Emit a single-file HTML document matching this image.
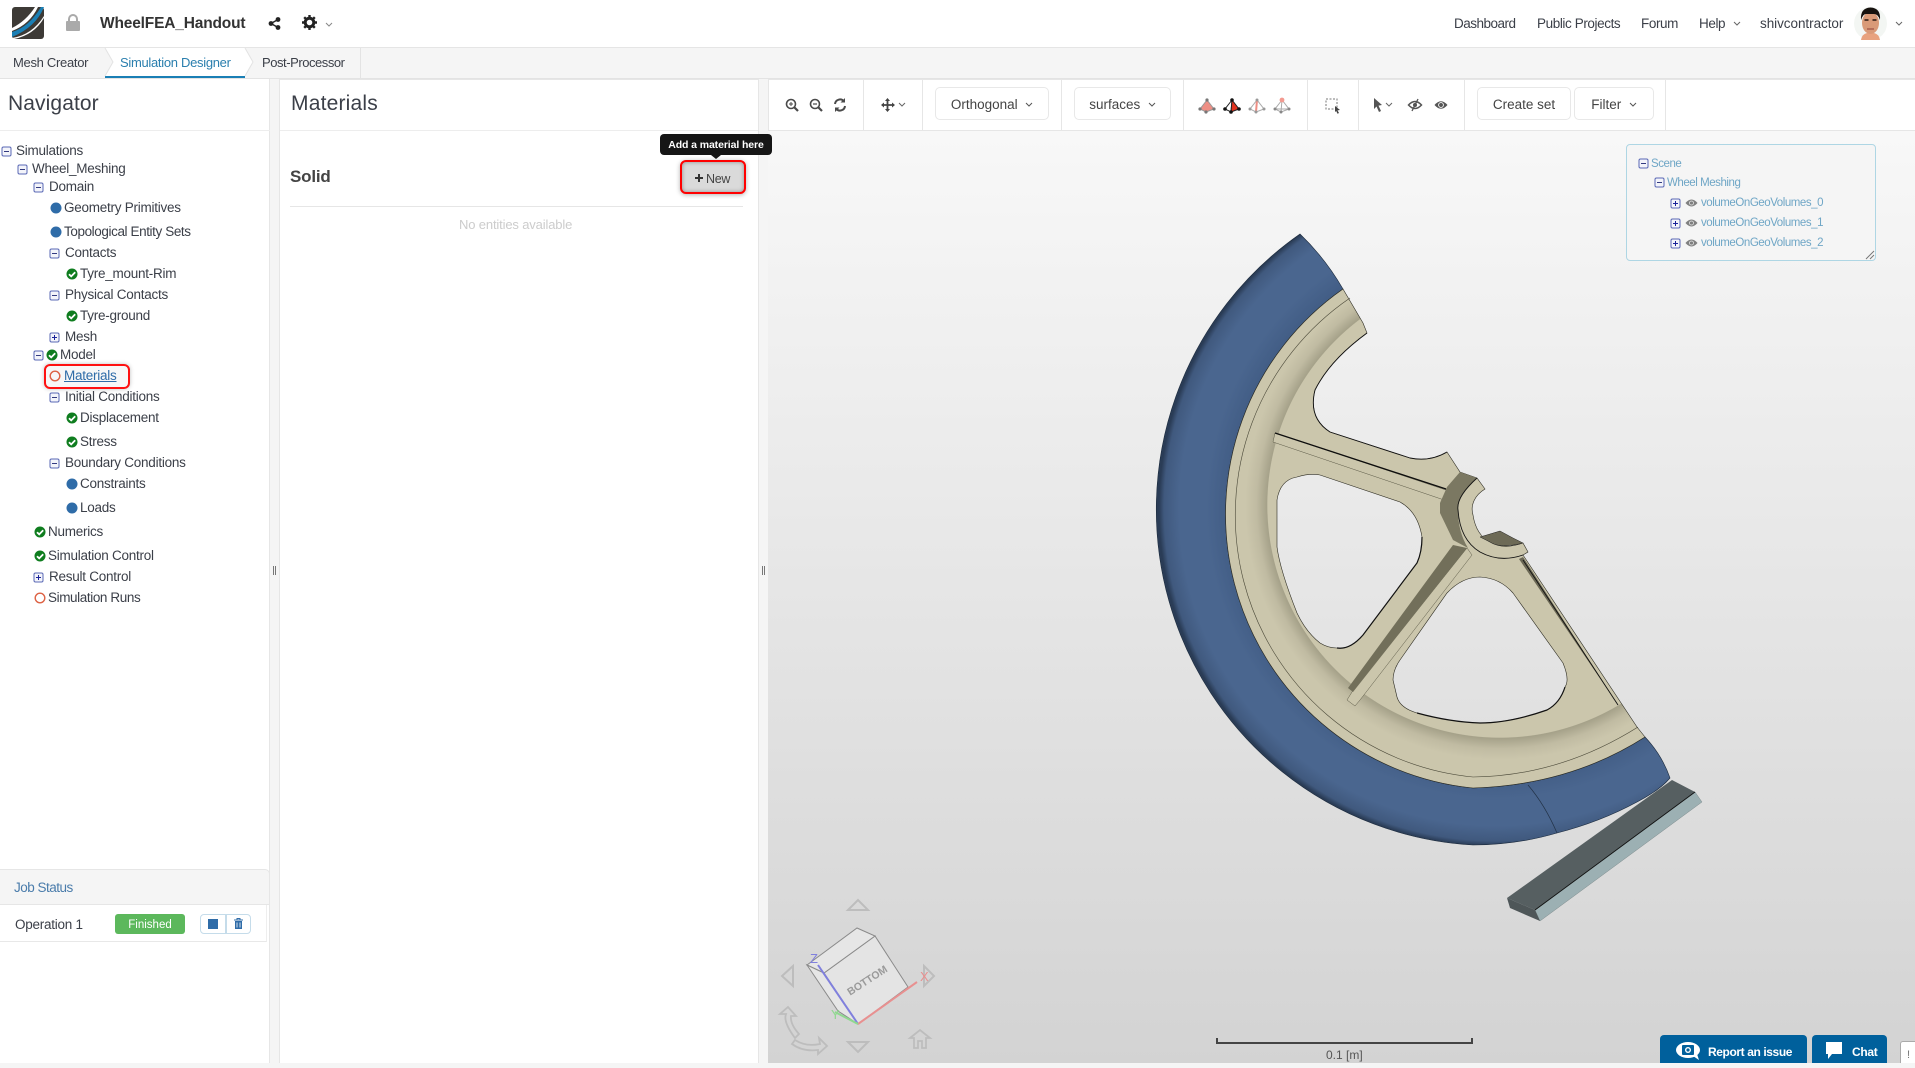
<!DOCTYPE html>
<html lang="en"><head><meta charset="utf-8"><title>WheelFEA_Handout</title>
<style>
*{box-sizing:border-box}
html,body{margin:0;padding:0;width:1915px;height:1063px;overflow:hidden;background:#f5f5f5;font-family:"Liberation Sans",Arial,sans-serif;color:#3b3f48}
.a{position:absolute}
.t{position:absolute;font-size:13.5px;letter-spacing:-.25px;line-height:20px;height:20px;white-space:nowrap;margin-top:1px}
.i{position:absolute;width:11px;height:11px;margin-top:1px}
.i.s{margin-top:0}
.btn{position:absolute;top:87px;height:33px;background:#fff;border:1px solid #e8e8e8;border-radius:5px;font-size:13.5px;line-height:33px;text-align:center;color:#444}
.t.sc{color:#6fa6c6;font-size:11.5px;letter-spacing:-.45px;margin-top:1px}
.sep{position:absolute;top:79px;width:1px;height:51px;background:#e6e6e6}
.tb{font-size:13px;letter-spacing:-.3px}
</style></head><body>
<svg width="0" height="0" style="position:absolute">
<defs>
<symbol id="m" viewBox="0 0 11 11"><rect x="1" y="1" width="9" height="9" rx="1.5" fill="#f3f4fa" stroke="#5a68b5"/><path d="M3 5.5h5" stroke="#333a80"/></symbol>
<symbol id="p" viewBox="0 0 11 11"><rect x="1" y="1" width="9" height="9" rx="1.5" fill="#f3f4fa" stroke="#5a68b5"/><path d="M3 5.5h5M5.5 3v5" stroke="#1a2299"/></symbol>
<symbol id="c" viewBox="0 0 12 12"><circle cx="6" cy="6" r="5.5" fill="#0f7d1f"/><path d="M3 6.2l2.2 2.2L9.2 4.3" fill="none" stroke="#fff" stroke-width="1.8"/></symbol>
<symbol id="d" viewBox="0 0 12 12"><circle cx="6" cy="6" r="5.5" fill="#2f6ca8"/></symbol>
<symbol id="o" viewBox="0 0 12 12"><circle cx="6" cy="6" r="4.8" fill="none" stroke="#dd6244" stroke-width="1.4"/></symbol>
<symbol id="e" viewBox="0 0 14 10"><path d="M0.500 5q6.500-7.500 13 0q-6.500 7.500-13 0z" fill="#808080"/><circle cx="7" cy="5" r="2.200" fill="none" stroke="#e8e8e8" stroke-width=".8"/></symbol>
<radialGradient id="tire" gradientUnits="userSpaceOnUse" cx="1496" cy="509" r="337">
<stop offset=".78" stop-color="#405b83"/><stop offset=".86" stop-color="#4a668f"/><stop offset=".94" stop-color="#4a668f"/><stop offset=".985" stop-color="#40597e"/><stop offset="1" stop-color="#2a3c56"/></radialGradient>
<radialGradient id="rim" gradientUnits="userSpaceOnUse" cx="1500" cy="505" r="280">
<stop offset="0" stop-color="#cbc6ac"/><stop offset=".83" stop-color="#cbc6ac"/><stop offset=".832" stop-color="#a5a189"/><stop offset=".87" stop-color="#c0bba2"/><stop offset=".91" stop-color="#cbc6ac"/><stop offset="1" stop-color="#cbc6ac"/></radialGradient>
</defs></svg>

<!-- top bar -->
<div class="a" style="left:0;top:0;width:1915px;height:48px;background:#fff;border-bottom:1px solid #e5e5e5"></div>
<svg class="a" style="left:12px;top:7px" width="32" height="32" viewBox="0 0 32 32"><rect width="32" height="32" rx="3" fill="#3d3a36"/><path d="M0 25Q17 20 29 0H32Q24 20 0 30Z" fill="#1a7fb5"/><path d="M0 21Q14 14 23 0H26Q18 17 0 24Z" fill="#fff"/><path d="M0 31Q20 28 32 9V11Q22 28 2 32Z" fill="#fff"/></svg>
<svg class="a" style="left:66px;top:14px" width="14" height="17" viewBox="0 0 14 17"><rect y="7" width="14" height="10" rx="1" fill="#aaa"/><path d="M3 8V5a4 4 0 0 1 8 0v3" fill="none" stroke="#aaa" stroke-width="2"/></svg>
<div class="t" style="left:100px;top:13px;font-size:15.5px;font-weight:700;letter-spacing:-.17px;color:#333">WheelFEA_Handout</div>
<svg class="a" style="left:268px;top:17px" width="13" height="13" viewBox="0 0 13 13"><path d="M10 2.5L3 6.5l7 4" fill="none" stroke="#222" stroke-width="1.4"/><circle cx="10" cy="2.5" r="2.4" fill="#222"/><circle cx="3" cy="6.5" r="2.4" fill="#222"/><circle cx="10" cy="10.5" r="2.4" fill="#222"/></svg>
<svg class="a" style="left:302px;top:15px" width="15" height="15" viewBox="0 0 15 15"><circle cx="7.5" cy="7.5" r="4.3" fill="none" stroke="#222" stroke-width="3"/><path d="M7.5 0v3M7.5 12v3M0 7.5h3M12 7.5h3M2.2 2.2l2 2M10.8 10.8l2 2M12.8 2.2l-2 2M4.2 10.8l-2 2" stroke="#222" stroke-width="2.4"/></svg>
<svg class="a" style="left:325px;top:22px" width="8" height="5" viewBox="0 0 8 5"><path d="M1 1l3 3 3-3" fill="none" stroke="#888"/></svg>
<div class="t" style="left:1454px;top:13px;letter-spacing:-.5px">Dashboard</div>
<div class="t" style="left:1537px;top:13px;letter-spacing:-.4px">Public Projects</div>
<div class="t" style="left:1641px;top:13px;letter-spacing:-.4px">Forum</div>
<div class="t" style="left:1699px;top:13px;letter-spacing:-.4px">Help</div>
<svg class="a" style="left:1733px;top:21px" width="8" height="5" viewBox="0 0 8 5"><path d="M1 1l3 3 3-3" fill="none" stroke="#666"/></svg>
<div class="t" style="left:1760px;top:13px;letter-spacing:-.05px">shivcontractor</div>
<svg class="a" style="left:1854px;top:7px" width="33" height="33" viewBox="0 0 33 33"><circle cx="16.5" cy="16.5" r="16.5" fill="#f3f6f3"/><path d="M7 33q1-6 6-7h7q5 1 6 7z" fill="#e8a27e"/><ellipse cx="16.5" cy="16" rx="8.5" ry="11" fill="#d99a78"/><path d="M7 13Q6 1 16.5 0.500Q27 1 26 13Q24 7 20 7H12Q9 7 7 13z" fill="#17120f"/><path d="M10.500 13h4M18.500 13h4" stroke="#2a1a14" stroke-width="1.400"/><path d="M13 22h7" stroke="#9c4f42" stroke-width="1.200"/></svg>
<svg class="a" style="left:1895px;top:21px" width="8" height="5" viewBox="0 0 8 5"><path d="M1 1l3 3 3-3" fill="none" stroke="#666"/></svg>

<!-- tab bar -->
<div class="a" style="left:0;top:48px;width:1915px;height:31px;background:#f5f5f5;border-bottom:1px solid #e3e3e3"></div>
<div class="a" style="left:105px;top:48px;width:140px;height:30px;background:#fff;border-bottom:2px solid #1a7fb5"></div>
<svg class="a" style="left:100px;top:48px" width="170" height="29" viewBox="0 0 170 29"><path d="M5 0l8 14-8 14" fill="#f5f5f5" stroke="#e3e3e3"/><path d="M145 0l8 14-8 14" fill="#fff" stroke="#e3e3e3"/></svg>
<div class="a" style="left:360px;top:48px;width:1px;height:30px;background:#e3e3e3"></div>
<div class="t tb" style="left:13px;top:52px">Mesh Creator</div>
<div class="t tb" style="left:120px;top:52px;color:#2b7fae">Simulation Designer</div>
<div class="t tb" style="left:262px;top:52px;letter-spacing:-.45px">Post-Processor</div>

<!-- navigator -->
<div class="a" style="left:0;top:79px;width:270px;height:984px;background:#fff;border-right:1px solid #e6e6e6"></div>
<div class="a" style="left:0;top:130px;width:270px;height:1px;background:#ededed"></div>
<div class="t" style="left:8px;top:90px;font-size:21px;line-height:26px;height:26px;letter-spacing:.1px">Navigator</div>

<svg class="i" style="left:1px;top:145px"><use href="#m"/></svg><div class="t" style="left:16px;top:140px">Simulations</div>
<svg class="i" style="left:17px;top:163px"><use href="#m"/></svg><div class="t" style="left:32px;top:158px">Wheel_Meshing</div>
<svg class="i" style="left:33px;top:181px"><use href="#m"/></svg><div class="t" style="left:49px;top:176px">Domain</div>
<svg class="i" style="left:50px;top:201px;width:12px;height:12px"><use href="#d"/></svg><div class="t" style="left:64px;top:197px">Geometry Primitives</div>
<svg class="i" style="left:50px;top:225px;width:12px;height:12px"><use href="#d"/></svg><div class="t" style="left:64px;top:221px;letter-spacing:-.4px">Topological Entity Sets</div>
<svg class="i" style="left:49px;top:247px"><use href="#m"/></svg><div class="t" style="left:65px;top:242px">Contacts</div>
<svg class="i" style="left:66px;top:267px;width:12px;height:12px"><use href="#c"/></svg><div class="t" style="left:80px;top:263px">Tyre_mount-Rim</div>
<svg class="i" style="left:49px;top:289px"><use href="#m"/></svg><div class="t" style="left:65px;top:284px">Physical Contacts</div>
<svg class="i" style="left:66px;top:309px;width:12px;height:12px"><use href="#c"/></svg><div class="t" style="left:80px;top:305px">Tyre-ground</div>
<svg class="i" style="left:49px;top:331px"><use href="#p"/></svg><div class="t" style="left:65px;top:326px">Mesh</div>
<svg class="i" style="left:33px;top:349px"><use href="#m"/></svg><svg class="i" style="left:46px;top:348px;width:12px;height:12px"><use href="#c"/></svg><div class="t" style="left:60px;top:344px">Model</div>
<div class="a" style="left:44px;top:364px;width:86px;height:25px;border:2px solid #f11;border-radius:6px;box-shadow:0 0 4px rgba(0,0,0,.25);background:#f7f7f7"></div>
<svg class="i" style="left:49px;top:369px;width:12px;height:12px"><use href="#o"/></svg><div class="t" style="left:64px;top:365px;color:#2f6ca8;text-decoration:underline">Materials</div>
<svg class="i" style="left:49px;top:391px"><use href="#m"/></svg><div class="t" style="left:65px;top:386px">Initial Conditions</div>
<svg class="i" style="left:66px;top:411px;width:12px;height:12px"><use href="#c"/></svg><div class="t" style="left:80px;top:407px">Displacement</div>
<svg class="i" style="left:66px;top:435px;width:12px;height:12px"><use href="#c"/></svg><div class="t" style="left:80px;top:431px">Stress</div>
<svg class="i" style="left:49px;top:457px"><use href="#m"/></svg><div class="t" style="left:65px;top:452px">Boundary Conditions</div>
<svg class="i" style="left:66px;top:477px;width:12px;height:12px"><use href="#d"/></svg><div class="t" style="left:80px;top:473px">Constraints</div>
<svg class="i" style="left:66px;top:501px;width:12px;height:12px"><use href="#d"/></svg><div class="t" style="left:80px;top:497px">Loads</div>
<svg class="i" style="left:34px;top:525px;width:12px;height:12px"><use href="#c"/></svg><div class="t" style="left:48px;top:521px">Numerics</div>
<svg class="i" style="left:34px;top:549px;width:12px;height:12px"><use href="#c"/></svg><div class="t" style="left:48px;top:545px">Simulation Control</div>
<svg class="i" style="left:33px;top:571px"><use href="#p"/></svg><div class="t" style="left:49px;top:566px">Result Control</div>
<svg class="i" style="left:34px;top:591px;width:12px;height:12px"><use href="#o"/></svg><div class="t" style="left:48px;top:587px;letter-spacing:-.4px">Simulation Runs</div>

<!-- job status -->
<div class="a" style="left:0;top:869px;width:270px;height:36px;background:#f5f5f5;border:1px solid #e6e6e6;border-left:0;border-radius:0 5px 0 0"></div>
<div class="t" style="left:14px;top:877px;color:#4a7cab;letter-spacing:-.5px">Job Status</div>
<div class="a" style="left:0;top:905px;width:267px;height:37px;border-bottom:1px solid #e8e8e8;border-right:1px solid #eee"></div>
<div class="t" style="left:15px;top:914px">Operation 1</div>
<div class="a" style="left:115px;top:914px;width:70px;height:20px;background:#5cb85c;border-radius:3px;color:#fff;font-size:11.5px;font-weight:400;line-height:22px;text-align:center">Finished</div>
<div class="a" style="left:200px;top:914px;width:26px;height:20px;border:1px solid #c5dcea;border-radius:4px 0 0 4px"></div>
<div class="a" style="left:208px;top:919px;width:10px;height:10px;background:#2f6ca8"></div>
<div class="a" style="left:226px;top:914px;width:25px;height:20px;border:1px solid #c5dcea;border-radius:0 4px 4px 0"></div>
<svg class="a" style="left:234px;top:918px" width="9" height="11" viewBox="0 0 9 11"><path d="M0 2h9M3 2V.5h3V2" stroke="#2f6ca8" fill="none"/><path d="M1 3h7v8H1z" fill="#2f6ca8"/><path d="M3 4.500v5M6 4.500v5" stroke="#fff" stroke-width=".8"/></svg>

<div class="a" style="left:273px;top:566px;width:1px;height:9px;background:#777;box-shadow:2px 0 0 #777"></div>

<!-- materials -->
<div class="a" style="left:279px;top:79px;width:480px;height:984px;background:#fff;border:1px solid #e6e6e6;border-bottom:0"></div>
<div class="a" style="left:280px;top:130px;width:478px;height:1px;background:#ededed"></div>
<div class="t" style="left:291px;top:90px;font-size:21px;line-height:26px;height:26px;letter-spacing:.2px">Materials</div>
<div class="t" style="left:290px;top:165px;font-size:17px;line-height:22px;height:22px;font-weight:700;letter-spacing:-.2px;color:#444">Solid</div>
<div class="a" style="left:290px;top:206px;width:453px;height:1px;background:#e6e6e6"></div>
<div class="t" style="left:459px;top:214px;color:#ccc;font-size:13px;letter-spacing:-.15px">No entities available</div>
<div class="a" style="left:680px;top:160px;width:66px;height:34px;border:2px solid #f00;border-radius:6px;background:#dadada;box-shadow:inset 0 0 4px rgba(0,0,0,.35),0 1px 5px rgba(0,0,0,.3)"></div>
<svg class="a" style="left:694px;top:173px" width="10" height="10" viewBox="0 0 10 10"><path d="M5 1v8M1 5h8" stroke="#333" stroke-width="2"/></svg>
<div class="t" style="left:706px;top:168px;font-size:12.5px;letter-spacing:-.3px;color:#444">New</div>

<div class="a" style="left:762px;top:566px;width:1px;height:9px;background:#777;box-shadow:2px 0 0 #777"></div>

<!-- viewport -->
<div class="a" style="left:768px;top:130px;width:1147px;height:933px;background:linear-gradient(#f8f8f8,#d3d3d3)"></div>
<!-- toolbar -->
<div class="a" style="left:768px;top:79px;width:1147px;height:52px;background:#fff;border-top:1px solid #e6e6e6;border-bottom:1px solid #e6e6e6;border-left:1px solid #e6e6e6"></div>
<div class="sep" style="left:863px"></div><div class="sep" style="left:922px"></div><div class="sep" style="left:1061px"></div><div class="sep" style="left:1183px"></div><div class="sep" style="left:1307px"></div><div class="sep" style="left:1358px"></div><div class="sep" style="left:1464px"></div><div class="sep" style="left:1665px"></div>
<svg class="a" style="left:785px;top:98px" width="64" height="14" viewBox="0 0 64 14" fill="none" stroke="#4a4a4a"><circle cx="6" cy="6" r="4.500" stroke-width="1.600"/><path d="M9.500 9.500L13 13" stroke-width="2.200"/><path d="M4 6h4M6 4v4" stroke-width="1"/><circle cx="30" cy="6" r="4.500" stroke-width="1.600"/><path d="M33.500 9.500L37 13" stroke-width="2.200"/><path d="M28 6h4" stroke-width="1.200"/><path d="M50 6a5 5 0 0 1 9-2.500M60 8a5 5 0 0 1-9 2.500" stroke-width="2"/><path d="M60 0v4.500h-4.500zM50 14V9.500h4.500z" fill="#4a4a4a" stroke="none"/></svg>
<svg class="a" style="left:881px;top:98px" width="30" height="14" viewBox="0 0 30 14"><path d="M6.500 1v12M1 7h12" stroke="#444" stroke-width="1.800"/><path d="M6.500 0l2.500 3H4zM6.500 14l2.500-3H4zM0 7l3-2.500v5zM14 7l-3-2.500v5z" fill="#444"/><path d="M18 5l3 3 3-3" fill="none" stroke="#666"/></svg>
<div class="btn" style="left:935px;width:114px">Orthogonal &nbsp;<svg width="8" height="5" viewBox="0 0 8 5" style="vertical-align:2px"><path d="M1 1l3 3 3-3" fill="none" stroke="#555"/></svg></div>
<div class="btn" style="left:1074px;width:97px">surfaces &nbsp;<svg width="8" height="5" viewBox="0 0 8 5" style="vertical-align:2px"><path d="M1 1l3 3 3-3" fill="none" stroke="#555"/></svg></div>
<svg class="a" style="left:1198px;top:97px" width="96" height="18" viewBox="0 0 96 18">
<path d="M9 3L2 12l6 3 8-3z" fill="#ee8f85" stroke="#999"/><g fill="#777"><circle cx="9" cy="3" r="1.600"/><circle cx="2" cy="12" r="1.600"/><circle cx="8" cy="15" r="1.600"/><circle cx="16" cy="12" r="1.600"/></g>
<path d="M34 3L27 12l6 3z" fill="#fff" stroke="#222"/><path d="M34 3l-1 12 8-3z" fill="#e2331f" stroke="#222"/><g fill="#111"><circle cx="34" cy="3" r="1.800"/><circle cx="27" cy="12" r="1.800"/><circle cx="33" cy="15" r="1.800"/><circle cx="41" cy="12" r="1.800"/></g>
<path d="M59 3L52 12l6 3 8-3zM59 3l-1 12" fill="none" stroke="#aaa"/><path d="M59 3l-1 12" stroke="#ee8f85" stroke-width="2"/><g fill="#999"><circle cx="59" cy="3" r="1.500"/><circle cx="52" cy="12" r="1.500"/><circle cx="58" cy="15" r="1.500"/><circle cx="66" cy="12" r="1.500"/></g>
<path d="M84 3L77 12l6 3 8-3zM84 3l-1 12M77 12h14" fill="none" stroke="#aaa"/><circle cx="84" cy="3" r="2.400" fill="#f39a90"/><g fill="#888"><circle cx="77" cy="12" r="1.500"/><circle cx="83" cy="15" r="1.500"/><circle cx="91" cy="12" r="1.500"/></g>
</svg>
<svg class="a" style="left:1325px;top:98px" width="16" height="16" viewBox="0 0 16 16"><rect x="1" y="1" width="11" height="10" fill="none" stroke="#777" stroke-dasharray="2 1.500"/><path d="M10 8l5 4-2.500.4L14 15l-1.500.7-1.300-2.700L10 14z" fill="#444"/></svg>
<svg class="a" style="left:1373px;top:97px" width="75" height="16" viewBox="0 0 75 16"><path d="M1 1l8 7-3.500.6L8 14l-2 1-2.500-5.500L1 12z" fill="#555"/><path d="M13 6l3 3 3-3" fill="none" stroke="#666"/><path d="M35.500 8q6.500-7 13 0q-6.500 7-13 0z" fill="none" stroke="#555" stroke-width="1.500"/><circle cx="42" cy="8" r="2" fill="#555"/><path d="M39 14l6-12" stroke="#555" stroke-width="1.300"/><path d="M61.500 8q6.500-7.500 13 0q-6.500 7.500-13 0z" fill="#555"/><circle cx="68" cy="8" r="2.400" fill="none" stroke="#fff" stroke-width=".9"/></svg>
<div class="btn" style="left:1477px;width:94px">Create set</div>
<div class="btn" style="left:1574px;width:80px">Filter &nbsp;<svg width="8" height="5" viewBox="0 0 8 5" style="vertical-align:2px"><path d="M1 1l3 3 3-3" fill="none" stroke="#555"/></svg></div>

<!-- scene tree -->
<div class="a" style="left:1626px;top:144px;width:250px;height:117px;border:1px solid #aed6e4;border-radius:4px;background:#f5f5f5"></div>
<svg class="i s" style="left:1638px;top:158px"><use href="#m"/></svg><div class="t sc" style="left:1651px;top:153px">Scene</div>
<svg class="i s" style="left:1654px;top:177px"><use href="#m"/></svg><div class="t sc" style="left:1667px;top:172px">Wheel Meshing</div>
<svg class="i s" style="left:1670px;top:198px"><use href="#p"/></svg><svg class="i s" style="left:1685px;top:198px;width:13px;height:10px"><use href="#e"/></svg><div class="t sc" style="left:1701px;top:192px">volumeOnGeoVolumes_0</div>
<svg class="i s" style="left:1670px;top:218px"><use href="#p"/></svg><svg class="i s" style="left:1685px;top:218px;width:13px;height:10px"><use href="#e"/></svg><div class="t sc" style="left:1701px;top:212px">volumeOnGeoVolumes_1</div>
<svg class="i s" style="left:1670px;top:238px"><use href="#p"/></svg><svg class="i s" style="left:1685px;top:238px;width:13px;height:10px"><use href="#e"/></svg><div class="t sc" style="left:1701px;top:232px">volumeOnGeoVolumes_2</div>
<svg class="a" style="left:1865px;top:250px" width="10" height="10" viewBox="0 0 10 10"><path d="M9 1L1 9M9 5L5 9" stroke="#777"/></svg>

<!-- 3D model -->
<svg class="a" style="left:0;top:0" width="1915" height="1063" viewBox="0 0 1915 1063" pointer-events="none">
<!-- tire -->
<path d="M1300 234A336 336 0 0 0 1473 845Q1516 845 1557 833Q1600 822 1637 802Q1660 790 1670 778Q1662 755 1645 737Q1570 785 1473 788A275 275 0 0 1 1343 289Q1325 258 1300 234z" fill="url(#tire)" stroke="#1b2a3c" stroke-width=".6"/>
<path d="M1528 785Q1545 805 1557 833" fill="none" stroke="#223247" stroke-width=".7"/>
<!-- ground block -->
<path d="M1507 898L1672 780 1695 792 1535 910z" fill="#565f61"/>
<path d="M1695 792L1702 802 1540 921 1535 910z" fill="#9cb0b3" stroke="#6f7c7e" stroke-width=".4"/>
<path d="M1507 898L1535 910 1540 921 1510 908z" fill="#4e5658"/>
<path d="M1535 910L1695 792" stroke="#111" stroke-width=".9"/>
<!-- rim -->
<path fill-rule="evenodd" fill="url(#rim)" stroke="#2b2a20" stroke-width=".6" d="M1343 289L1363 323 1367 333Q1330 360 1315 390Q1308 418 1330 432L1410 458Q1430 462 1447 452L1460 472 1477 478 1485 489C1475 495 1470 505 1473 515C1475 528 1480 537 1490 542C1500 548 1512 547 1523 543L1528 552 1523 555 1637 727 1645 737Q1570 785 1473 788A275 275 0 0 1 1343 289z
M1277 500Q1280 480 1297 477Q1310 473 1320 475L1400 502Q1418 512 1422 537Q1422 552 1417 563L1363 635Q1350 650 1337 648Q1328 648 1320 643Q1306 632 1297 613Q1280 570 1277 547z
M1393 680Q1393 670 1400 660L1447 593Q1462 577 1480 577Q1500 578 1513 593L1563 663Q1570 680 1565 687Q1560 703 1547 710Q1510 723 1480 723Q1450 722 1417 713Q1400 708 1397 697z"/>
<path d="M1367 333Q1330 360 1315 390Q1308 418 1330 432L1410 458Q1430 462 1447 452" fill="none" stroke="#111" stroke-width=".9"/>
<path d="M1350 298A263 263 0 0 0 1473 777Q1560 776 1638 727" fill="none" stroke="#4a4838" stroke-width=".6"/>
<path d="M1422 537Q1422 552 1417 563L1363 635Q1350 650 1337 648" fill="none" stroke="#111" stroke-width="1.200"/>
<path d="M1565 687Q1560 703 1547 710Q1510 723 1480 723Q1450 722 1417 713" fill="none" stroke="#111" stroke-width="1.200"/>
<!-- upper rib -->
<path d="M1275 433L1455 493 1453 503 1273 442z" fill="#cbc6ac" stroke="#5a5846" stroke-width=".5"/>
<path d="M1275 433L1446 489" stroke="#0d0d0d" stroke-width="1.300"/>
<!-- hub -->
<path d="M1447 487L1460 472 1477 478Q1456 497 1458 510Q1458 532 1468 548L1453 540 1440 513 1440 503z" fill="#7b7862"/>
<path d="M1477 478Q1456 497 1458 510Q1460 540 1480 552Q1500 563 1523 555" fill="none" stroke="#111" stroke-width=".9"/>
<path d="M1480 537L1500 531 1513 538 1523 543Q1500 549 1490 542z" fill="#6d6a56" stroke="#222" stroke-width=".5"/>
<!-- lower-left rib -->
<path d="M1467 548L1472 555 1360 700 1355 706 1347 700 1352 692z" fill="#cbc6ac" stroke="#5a5846" stroke-width=".5"/>
<path d="M1453 545L1467 548 1353 692 1348 688z" fill="#726f5a"/>
<!-- right rib -->
<path d="M1519 559L1523 557 1618 705z" fill="#6a6754"/>
<path d="M1523 560L1618 705" stroke="#111" stroke-width=".9"/>
</svg>

<!-- nav cube -->
<svg class="a" style="left:770px;top:890px" width="200" height="173" viewBox="770 890 200 173">
<g fill="none" stroke="#bdbdbd" stroke-width="2"><path d="M848 910L858 900 868 910z"/><path d="M793 966L782 976 793 986z"/><path d="M924 966L934 976 924 986z"/><path d="M848 1042L858 1052 868 1042z"/></g>
<path d="M824 973L875 936 908 987 858 1024z" fill="#e4e4e4" stroke="#8a8a8a" stroke-width="1"/>
<path d="M807 965L857 928 875 936 824 973z" fill="#e6e6e6" stroke="#8a8a8a" stroke-width="1"/>
<path d="M807 965L824 973 858 1024 838 1011z" fill="#e6e6e6" stroke="#8a8a8a" stroke-width="1"/>
<path d="M858 1024L818 965" stroke="#8080dd" stroke-width="2"/><path d="M858 1024L917 982" stroke="#e89090" stroke-width="2"/><path d="M858 1024L835 1012" stroke="#8fd88f" stroke-width="2"/>
<text x="867" y="984" font-size="10.5" font-weight="700" fill="#9a9a9a" text-anchor="middle" transform="rotate(-33 867 980)" font-family="Liberation Sans">BOTTOM</text>
<text x="810" y="963" font-size="13" fill="#8080dd" font-family="Liberation Sans">Z</text>
<text x="831" y="1019" font-size="13" fill="#8fd88f" font-family="Liberation Sans">Y</text>
<text x="920" y="981" font-size="13" fill="#e89090" font-family="Liberation Sans">X</text>
<path d="M795 1038Q783 1022 786 1014L780 1014 788 1007 796 1016 791 1016Q790 1024 799 1034zM795 1040Q806 1047 820 1044L819 1038 827 1046 818 1054 818 1050Q803 1052 792 1044z" fill="none" stroke="#bdbdbd" stroke-width="1.800"/>
<path d="M910 1038L920 1030 930 1038H926V1048H922V1041H918V1048H914V1038z" fill="none" stroke="#bdbdbd" stroke-width="1.800"/>
</svg>

<!-- tooltip -->
<div class="a" style="left:660px;top:134px;width:112px;height:21px;background:#161616;border-radius:4px;color:#fff;font-size:10.5px;font-weight:700;line-height:22px;text-align:center;letter-spacing:-.1px;z-index:5">Add a material here</div>
<div class="a" style="left:711px;top:155px;width:0;height:0;border:5px solid transparent;border-top:4px solid #161616;border-bottom:0;z-index:5"></div>

<!-- scale -->
<div class="a" style="left:1216px;top:1042px;width:257px;height:2px;background:#444"></div>
<div class="a" style="left:1216px;top:1038px;width:2px;height:6px;background:#444"></div>
<div class="a" style="left:1471px;top:1038px;width:2px;height:6px;background:#444"></div>
<div class="t" style="left:1326px;top:1044px;font-size:12px;color:#555;letter-spacing:0">0.1 [m]</div>

<!-- buttons -->
<div class="a" style="left:1660px;top:1035px;width:147px;height:28px;background:#00609c;border-radius:4px 4px 0 0"></div>
<svg class="a" style="left:1675px;top:1042px" width="28" height="18" viewBox="0 0 28 18"><ellipse cx="13" cy="8" rx="12" ry="8" fill="#fff"/><path d="M18 14l6 4-2-6z" fill="#fff"/><rect x="7" y="3" width="12" height="10" rx="1" fill="#00609c"/><circle cx="13" cy="8" r="3" fill="#fff"/><circle cx="13" cy="8" r="1.600" fill="#00609c"/></svg>
<div class="t" style="left:1708px;top:1041px;font-size:12px;font-weight:700;color:#fff;letter-spacing:-.4px">Report an issue</div>
<div class="a" style="left:1812px;top:1035px;width:75px;height:28px;background:#00609c;border-radius:4px 4px 0 0"></div>
<svg class="a" style="left:1825px;top:1042px" width="18" height="17" viewBox="0 0 18 17"><path d="M1 0h16v12H7l-4 5v-5H1z" fill="#fff"/></svg>
<div class="t" style="left:1852px;top:1041px;font-size:12px;font-weight:700;color:#fff;letter-spacing:-.3px">Chat</div>
<div class="a" style="left:1900px;top:1041px;width:15px;height:22px;background:#fff;border:1px solid #aaa;border-right:0;border-bottom:0;border-radius:3px 0 0 0;font-size:11px;line-height:26px;padding-left:6px;color:#777">!</div>
</body></html>
